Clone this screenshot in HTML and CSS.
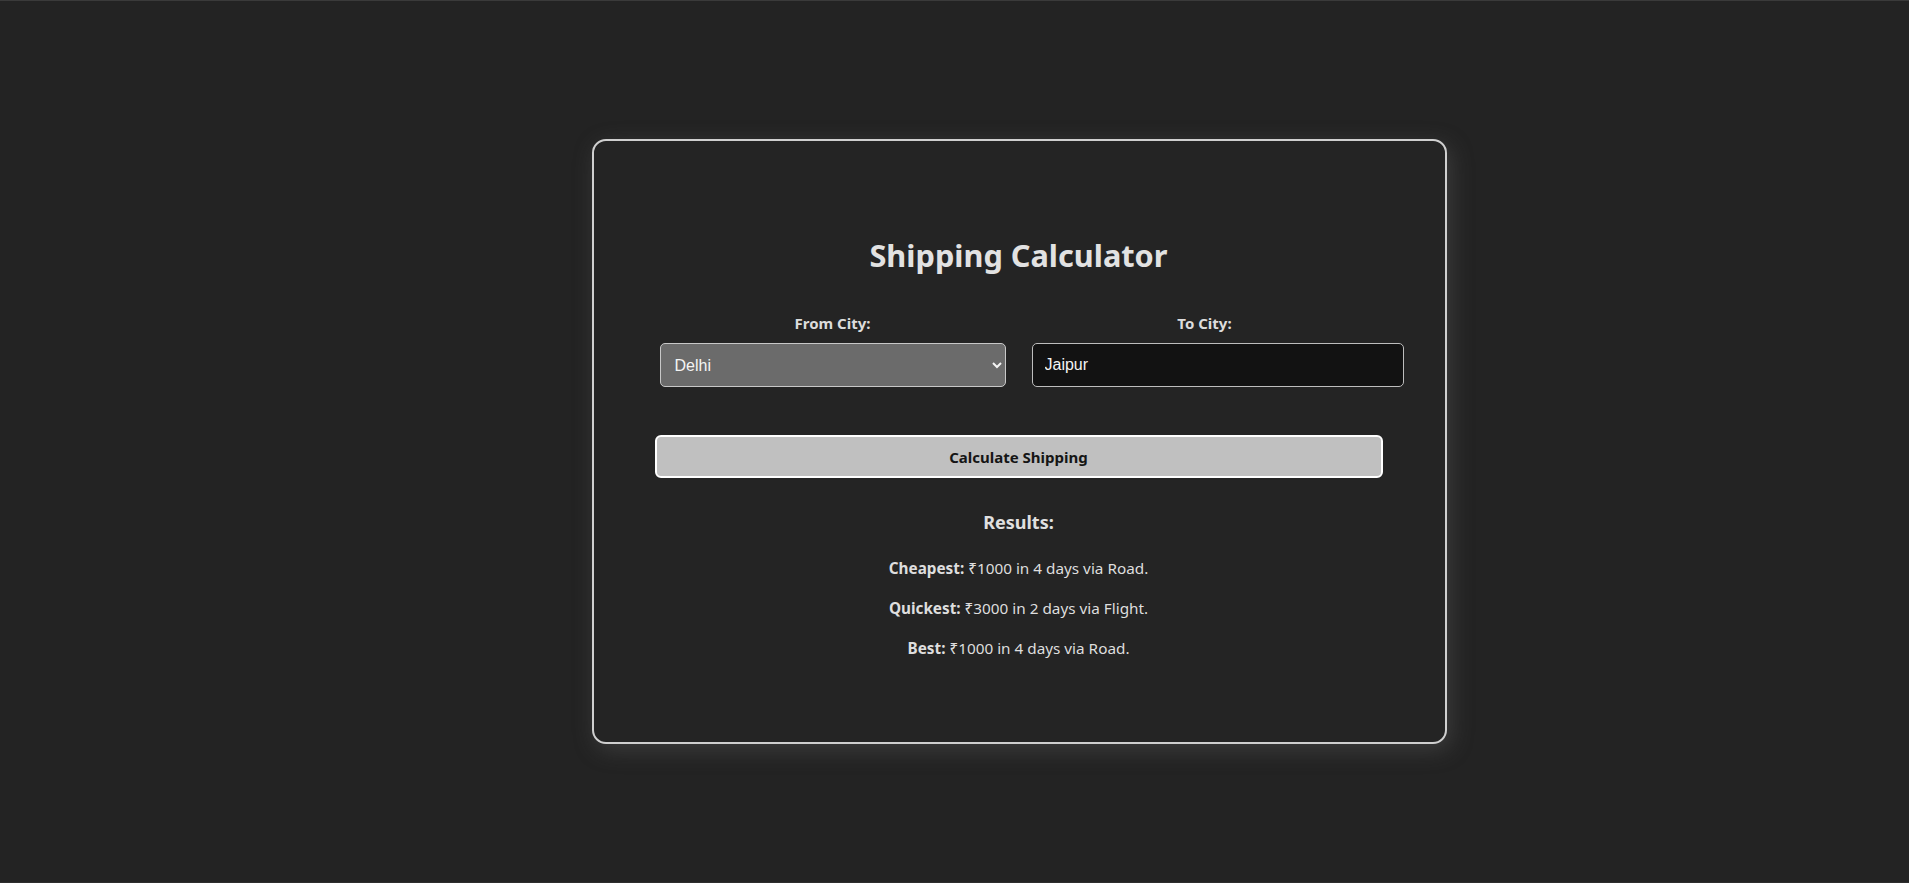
FILE: index.html
```html
<!DOCTYPE html>
<html lang="en">
<head>
<meta charset="utf-8">
<title>Shipping Calculator</title>
<link rel="stylesheet" href="styles.css">
</head>
<body>
<main class="card">
  <h2 class="title">Shipping Calculator</h2>
  <div class="fields">
    <div class="field">
      <label class="label" for="from">From City:</label>
      <select id="from" class="select">
        <option>Delhi</option>
        <option>Mumbai</option>
        <option>Jaipur</option>
      </select>
    </div>
    <div class="field">
      <label class="label" for="to">To City:</label>
      <input id="to" class="input" type="text" value="Jaipur">
    </div>
  </div>
  <button class="btn" type="button">Calculate Shipping</button>
  <section class="results">
    <h3 class="results-title">Results:</h3>
    <p class="line"><strong>Cheapest:</strong> ₹1000 in 4 days via Road.</p>
    <p class="line"><strong>Quickest:</strong> ₹3000 in 2 days via Flight.</p>
    <p class="line"><strong>Best:</strong> ₹1000 in 4 days via Road.</p>
  </section>
</main>
</body>
</html>
```

FILE: styles.css
```css
* { box-sizing: border-box; }
html, body { margin: 0; padding: 0; }
body {
  height: 883px;
  background: #232323;
  border-top: 1px solid #3a3a3a;
  border-bottom: 1px solid #2e2e2e;
  font-family: "Noto Sans", "DejaVu Sans", sans-serif;
  color: #e0e0e0;
  display: flex;
  justify-content: center;
  align-items: flex-start;
  padding-top: 138px;
  padding-left: 129px;
}
.card {
  width: 855px;
  background: #242424;
  border: 2px solid #cfcfcf;
  border-radius: 14px;
  box-shadow: 4px 6px 22px rgba(90, 90, 90, 0.45);
  padding: 96px 67px 84px 66px;
  display: flex;
  flex-direction: column;
  align-items: stretch;
}
.title {
  margin: 0;
  text-align: center;
  font-size: 30.7px;
  line-height: 37px;
  font-weight: 700;
  color: #e2e2e2;
}
.fields {
  margin-top: 39px;
  display: grid;
  grid-template-columns: 1fr 1fr;
  column-gap: 26px;
}
.field {
  display: flex;
  flex-direction: column;
  align-items: stretch;
}
.label {
  text-align: center;
  font-size: 15px;
  line-height: 20px;
  font-weight: 700;
  color: #dcdcdc;
  margin-bottom: 10px;
}
.select {
  height: 44px;
  background: #6b6b6b;
  color: #f4f4f4;
  border: 1px solid #c8c8c8;
  border-radius: 5px;
  font-family: "Liberation Sans", Arial, sans-serif;
  font-size: 16px;
  padding: 0 10px;
}
.input {
  box-sizing: content-box;
  width: 100%;
  height: 20px;
  padding: 11px 12px;
  background: #121212;
  color: #f4f4f4;
  border: 1px solid #bdbdbd;
  border-radius: 5px;
  font-family: "Liberation Sans", Arial, sans-serif;
  font-size: 16px;
  outline: none;
}
.btn {
  margin: 48px -5px 0 -5px;
  height: 43px;
  background: #c0c0c0;
  color: #151515;
  border: 2px solid #ffffff;
  border-radius: 6px;
  font-family: "Noto Sans", "DejaVu Sans", sans-serif;
  font-size: 15px;
  font-weight: 700;
}
.results {
  margin-top: 32px;
  text-align: center;
}
.results-title {
  margin: 0;
  font-size: 18px;
  line-height: 24px;
  font-weight: 700;
  color: #e0e0e0;
}
.line {
  margin: 20px 0 0 0;
  font-size: 15.3px;
  line-height: 20px;
  color: #dedede;
}
.results-title + .line { margin-top: 24px; }
.line strong { font-weight: 700; }
```
